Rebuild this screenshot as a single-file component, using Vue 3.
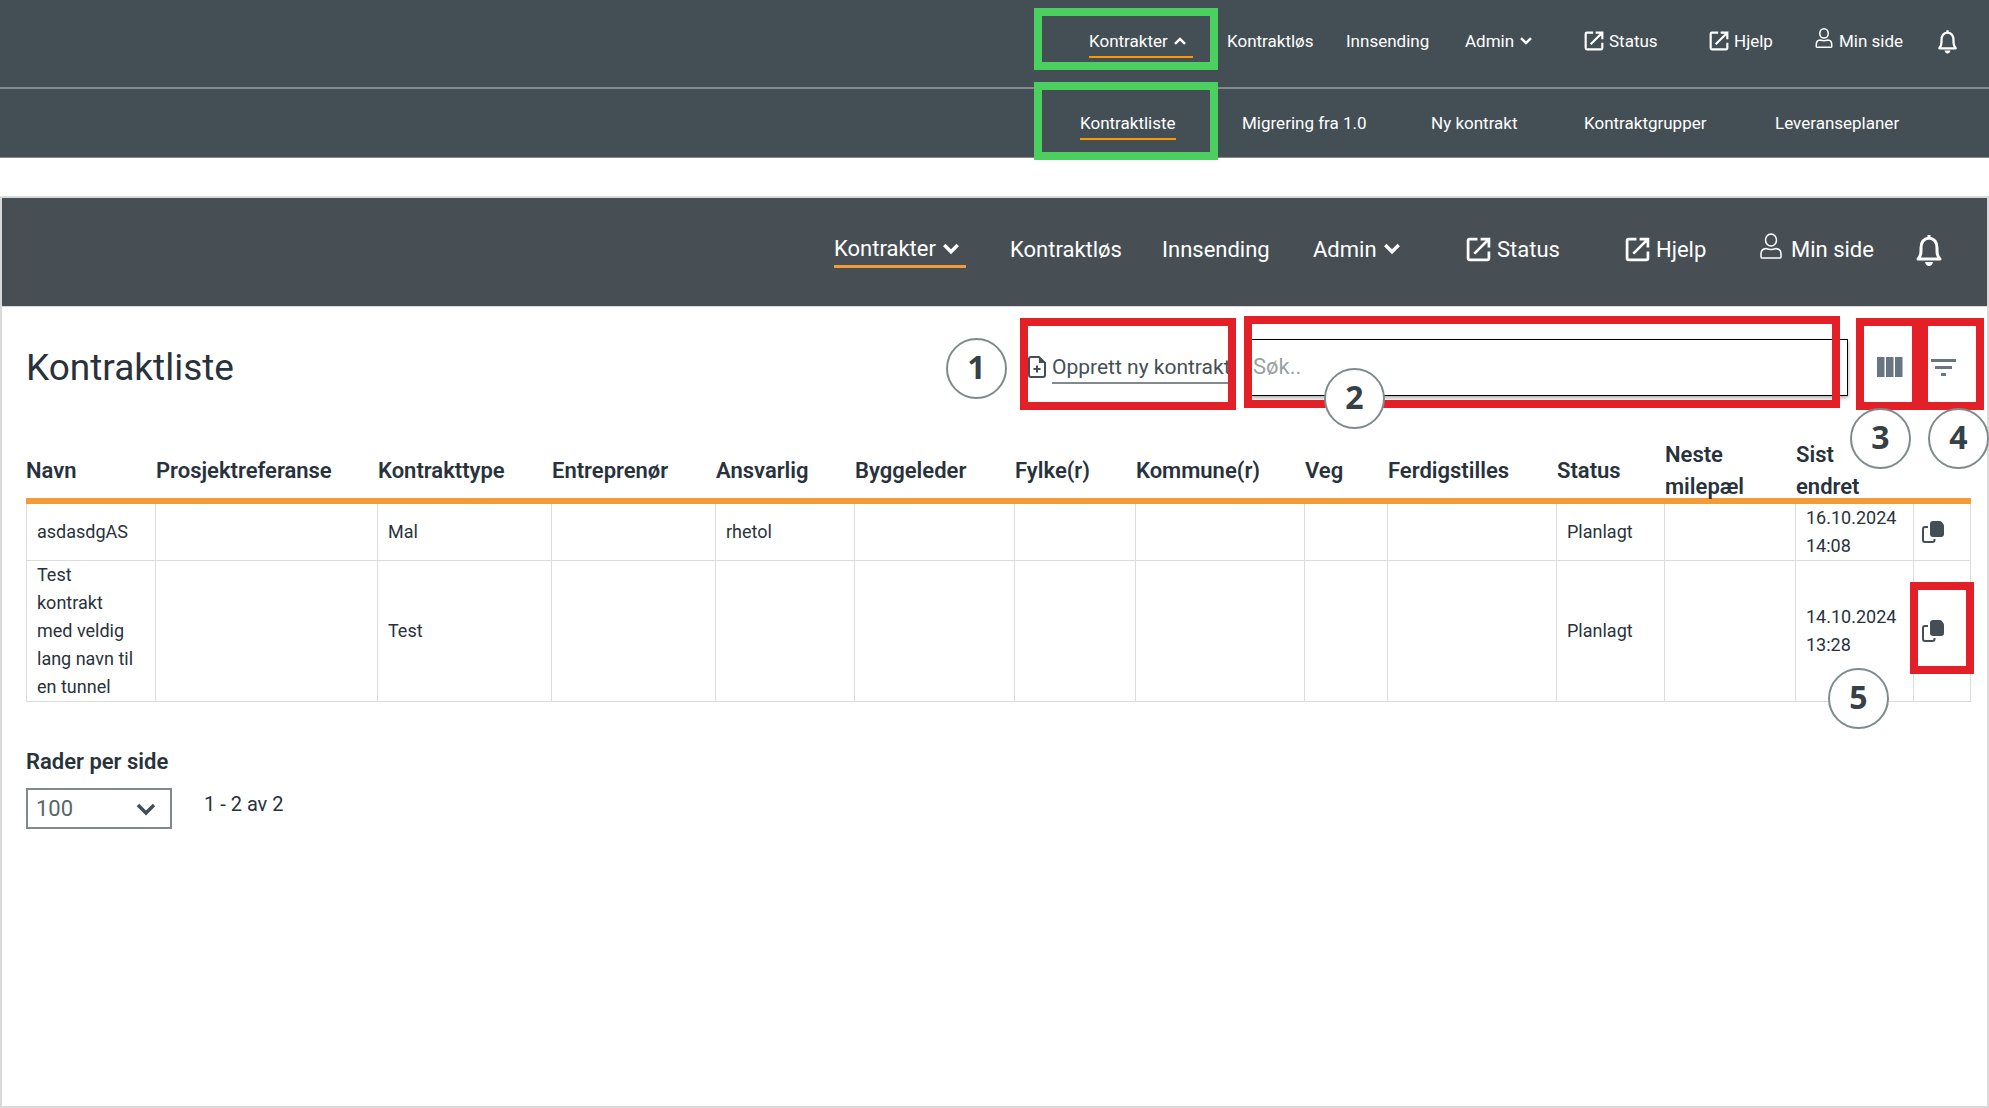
<script setup>
const menuItems = [
  { label: 'Kontrakter', menu: true, active: true },
  { label: 'Kontraktløs' },
  { label: 'Innsending' },
  { label: 'Admin', menu: true },
  { label: 'Status', icon: 'external' },
  { label: 'Hjelp', icon: 'external' },
  { label: 'Min side', icon: 'user' },
]

const bars = [
  { name: 'compact', open: true },
  { name: 'large', open: false },
]

const subItems = ['Kontraktliste', 'Migrering fra 1.0', 'Ny kontrakt', 'Kontraktgrupper', 'Leveranseplaner']

const columns = [
  { key: 'navn', label: 'Navn', share: 130 },
  { key: 'ref', label: 'Prosjektreferanse', share: 222 },
  { key: 'type', label: 'Kontrakttype', share: 174 },
  { key: 'entreprenor', label: 'Entreprenør', share: 164 },
  { key: 'ansvarlig', label: 'Ansvarlig', share: 139 },
  { key: 'byggeleder', label: 'Byggeleder', share: 160 },
  { key: 'fylke', label: 'Fylke(r)', share: 121 },
  { key: 'kommune', label: 'Kommune(r)', share: 169 },
  { key: 'veg', label: 'Veg', share: 83 },
  { key: 'ferdig', label: 'Ferdigstilles', share: 169 },
  { key: 'status', label: 'Status', share: 108 },
  { key: 'milepael', label: 'Neste milepæl', share: 131 },
  { key: 'endret', label: 'Sist endret', share: 118 },
  { key: 'kopier', label: '', share: 57 },
]
const total = columns.reduce((sum, c) => sum + c.share, 0)

const rows = [
  { navn: 'asdasdgAS', type: 'Mal', ansvarlig: 'rhetol', status: 'Planlagt', endret: '16.10.2024 14:08' },
  { navn: 'Test kontrakt med veldig lang navn til en tunnel', type: 'Test', status: 'Planlagt', endret: '14.10.2024 13:28' },
]
</script>

<template>
  <div class="page">
    <template v-for="bar in bars" :key="bar.name">
      <header v-if="bar.open" class="top">
        <nav class="bar compact">
          <a v-for="item in menuItems" :key="item.label" href="#" class="item" :class="{ active: item.active }">
            <svg v-if="item.icon === 'external'" class="ext" viewBox="0 0 24 24"><path d="M11 2H3.500Q2 2 2 3.500V20.500Q2 22 3.500 22H20.500Q22 22 22 20.500V14M14 2H22V10M21 3L8 16" /></svg>
            <svg v-if="item.icon === 'user'" class="user" viewBox="0 0 22 26"><ellipse cx="11" cy="7" rx="5.500" ry="6" /><path d="M1 24V21Q1 16 6 15.500Q11 17.500 16 15.500Q21 16 21 21V24Q21 25 20 25H2Q1 25 1 24Z" /></svg>
            <span>{{ item.label }}</span>
            <svg v-if="item.menu" class="chev" viewBox="0 0 16 12"><path :d="item.active ? 'M2 9.500L8 3.500L14 9.500' : 'M2 2.500L8 8.500L14 2.500'" /></svg>
          </a>
          <button class="bell" type="button" aria-label="Varsler">
            <svg viewBox="0 0 28 32"><path d="M3 25Q6 22 6 17V14Q6 5 14 4Q22 5 22 14V17Q22 22 25 25Z" /><path class="fill" d="M12.500 1H15.500V5H12.500ZM10 28H18Q17 32 14 32Q11 32 10 28Z" /></svg>
          </button>
        </nav>
        <nav class="sub">
          <a v-for="(label, i) in subItems" :key="label" href="#" class="item" :class="{ active: i === 0 }"><span>{{ label }}</span></a>
        </nav>
      </header>

      <section v-else class="frame">
        <nav class="bar large">
          <a v-for="item in menuItems" :key="item.label" href="#" class="item" :class="{ active: item.active }">
            <svg v-if="item.icon === 'external'" class="ext" viewBox="0 0 24 24"><path d="M11 2H3.500Q2 2 2 3.500V20.500Q2 22 3.500 22H20.500Q22 22 22 20.500V14M14 2H22V10M21 3L8 16" /></svg>
            <svg v-if="item.icon === 'user'" class="user" viewBox="0 0 22 26"><ellipse cx="11" cy="7" rx="5.500" ry="6" /><path d="M1 24V21Q1 16 6 15.500Q11 17.500 16 15.500Q21 16 21 21V24Q21 25 20 25H2Q1 25 1 24Z" /></svg>
            <span>{{ item.label }}</span>
            <svg v-if="item.menu" class="chev" viewBox="0 0 16 12"><path d="M2 2.500L8 8.500L14 2.500" /></svg>
          </a>
          <button class="bell" type="button" aria-label="Varsler">
            <svg viewBox="0 0 28 32"><path d="M3 25Q6 22 6 17V14Q6 5 14 4Q22 5 22 14V17Q22 22 25 25Z" /><path class="fill" d="M12.500 1H15.500V5H12.500ZM10 28H18Q17 32 14 32Q11 32 10 28Z" /></svg>
          </button>
        </nav>

        <main class="content">
          <div class="heading">
            <h1>Kontraktliste</h1>
            <a href="#" class="create">
              <svg viewBox="0 0 18 22"><path d="M11 1H3Q1 1 1 3V19Q1 21 3 21H15Q17 21 17 19V7ZM9 9.500V16.500M5.500 13H12.500" /><path class="fill" d="M11 1L17 7H11Z" /></svg>
              <span>Opprett ny kontrakt</span>
            </a>
            <input class="search" type="search" placeholder="Søk.." aria-label="Søk" />
            <button class="tool" type="button" aria-label="Vis kolonner">
              <svg viewBox="0 0 26 20"><path d="M0 0H7.500V20H0ZM9 0H16.500V20H9ZM18 0H25.500V20H18Z" /></svg>
            </button>
            <button class="tool filter" type="button" aria-label="Filter">
              <svg viewBox="0 0 26 20"><path d="M0 2H25V5H0ZM4 9H21V12H4ZM10 16H15V19H10Z" /></svg>
            </button>
          </div>

          <table>
            <colgroup>
              <col v-for="c in columns" :key="c.key" :style="{ width: (c.share / total) * 100 + '%' }" />
            </colgroup>
            <thead>
              <tr>
                <th v-for="c in columns" :key="c.key" scope="col">{{ c.label }}</th>
              </tr>
            </thead>
            <tbody>
              <tr v-for="row in rows" :key="row.navn">
                <td v-for="c in columns" :key="c.key">
                  <button v-if="c.key === 'kopier'" class="copy" type="button" aria-label="Kopier kontrakt">
                    <svg viewBox="0 0 22 22"><path class="line" d="M6 6H3Q1 6 1 8V19Q1 21 3 21H10.500Q12.500 21 12.500 19V18" /><path d="M11 0H17.500Q19 0 20 1.200L21.300 3Q22 4 22 5V13Q22 16 19 16H11Q8 16 8 13V3Q8 0 11 0Z" /></svg>
                  </button>
                  <template v-else>{{ row[c.key] }}</template>
                </td>
              </tr>
            </tbody>
          </table>

          <div class="paging">
            <label for="rows">Rader per side</label>
            <div class="paging-row">
              <div class="picker">
                <select id="rows"><option>100</option></select>
                <svg viewBox="0 0 20 14"><path d="M2 3L10 11L18 3" /></svg>
              </div>
              <span>1 - 2 av 2</span>
            </div>
          </div>
        </main>
      </section>
    </template>

    <div class="mark green menu"></div>
    <div class="mark green submenu"></div>
    <div class="mark m1"></div>
    <div class="mark m2"></div>
    <div class="mark m3"></div>
    <div class="mark m4"></div>
    <div class="mark m5"></div>
    <div class="num n1">1</div>
    <div class="num n2">2</div>
    <div class="num n3">3</div>
    <div class="num n4">4</div>
    <div class="num n5">5</div>
  </div>
</template>

<style>
body {
  margin: 0;
  background: #fff;
}
</style>

<style scoped>
* {
  box-sizing: border-box;
}
.page {
  position: relative;
  display: flex;
  flex-direction: column;
  min-height: 100vh;
  font-family: Roboto, "Noto Sans", sans-serif;
  color: #28323c;
}
button {
  padding: 0;
  border: 0;
  background: none;
  cursor: pointer;
}
svg {
  display: block;
  flex: none;
  fill: none;
  stroke: currentColor;
}
.fill {
  fill: currentColor;
  stroke: none;
}
.top {
  margin-bottom: 38px;
  background: #444f55;
  border-bottom: 1px solid #808a8f;
  font-size: 17px;
}
.bar,
.sub {
  display: grid;
  align-items: center;
  justify-content: end;
  color: #fff;
}
.item {
  display: flex;
  align-items: center;
  justify-self: start;
  color: #fff;
  text-decoration: none;
  white-space: nowrap;
  border-bottom: 2px solid transparent;
}
.item.active {
  border-bottom-color: #ff9800;
}
.compact {
  grid-template-columns: 138px 119px 119px 119px 125px 106px 122px 21px;
  height: 89px;
  padding: 0 31px 4px 0;
  border-bottom: 2px solid #808a8f;
}
.compact .item {
  height: 32px;
  gap: 5px;
}
.sub {
  grid-template-columns: 162px 189px 153px 191px 124px;
  height: 68px;
  padding: 1px 90px 0 0;
}
.sub .item {
  height: 32px;
}
.chev {
  width: 14px;
  height: 10px;
  stroke-width: 3;
}
.item.active .chev {
  margin-right: 6px;
}
.ext {
  width: 20px;
  height: 20px;
  stroke-width: 2.6;
}
.user {
  width: 18px;
  height: 20px;
  margin: 0 1px 6px 0;
  stroke-width: 2;
}
.bell svg {
  width: 21px;
  height: 25px;
  color: #fff;
  stroke-width: 3;
  stroke-linejoin: round;
}
.frame {
  flex: 1;
  border: 2px solid #d9d9d9;
}
.large {
  grid-template-columns: 176px 152px 151px 153px 159px 135px 155px 28px;
  height: 109px;
  padding: 0 44px 4px 0;
  font-size: 22px;
  background: #474f55;
  border-bottom: 1px solid #d9d9d9;
}
.large .item {
  height: 36px;
  gap: 6px;
}
.large .item.active {
  border-bottom: 3px solid #f39c37;
}
.large .chev {
  width: 18px;
  height: 14px;
}
.large .ext {
  width: 25px;
  height: 25px;
}
.large .user {
  width: 22px;
  height: 26px;
  margin-right: 3px;
  stroke-width: 1.5;
}
.large .bell svg {
  width: 28px;
  height: 32px;
}
.content {
  padding: 31px 16px 0 24px;
}
.heading {
  display: flex;
  align-items: center;
  height: 58px;
}
h1 {
  flex: 1;
  margin: 0;
  font-size: 37px;
  font-weight: 400;
}
.create {
  display: flex;
  align-items: center;
  gap: 6px;
  width: 220px;
  color: #444f55;
  font-size: 21px;
  text-decoration: none;
  white-space: nowrap;
}
.create svg {
  width: 18px;
  height: 22px;
  stroke-width: 2;
}
.create span {
  margin-top: 2px;
  line-height: 30px;
  border-bottom: 2px solid #808a8f;
}
.search {
  width: 600px;
  height: 57px;
  padding: 0 4px 2px;
  border: 1px solid #000;
  border-radius: 0;
  outline: 0;
  background: #fff;
  box-shadow: 0 2px 4px #0005;
  font: 22px Roboto, sans-serif;
}
.search::placeholder {
  color: #9a9fa2;
}
.tool {
  margin-left: 29px;
  color: #687684;
}
.tool svg {
  width: 26px;
  height: 20px;
  fill: currentColor;
  stroke: none;
}
.tool.filter {
  margin: 0 14px 0 28px;
}
table {
  width: 100%;
  margin-top: 43px;
  border-collapse: separate;
  border-spacing: 0;
  table-layout: fixed;
}
th {
  height: 65px;
  padding: 0 16px 1px 0;
  font-size: 22px;
  font-weight: 600;
  line-height: 32px;
  text-align: left;
  background: linear-gradient(#f39c37, #f39c37) bottom / 100% 6px no-repeat;
}
td {
  height: 57px;
  padding: 0 16px 0 10px;
  border-right: 1px solid #dcdcdc;
  border-bottom: 1px solid #dcdcdc;
  font-size: 18px;
  line-height: 28px;
}
td:first-child {
  border-left: 1px solid #dcdcdc;
}
.copy {
  display: block;
  color: #444f55;
}
td:last-child {
  padding: 0 8px;
}
.copy svg {
  width: 22px;
  height: 22px;
  fill: currentColor;
  stroke: none;
}
.copy .line {
  fill: none;
  stroke: currentColor;
  stroke-width: 2;
}
.paging {
  margin-top: 44px;
}
label {
  display: block;
  font-size: 22px;
  font-weight: 600;
  line-height: 32px;
}
.paging-row {
  display: flex;
  gap: 32px;
  margin-top: 10px;
  font-size: 20px;
  line-height: 32px;
}
.picker {
  display: grid;
  align-items: center;
  width: 146px;
}
.picker > * {
  grid-area: 1 / 1;
}
select {
  height: 41px;
  padding: 0 8px;
  appearance: none;
  border: 2px solid #808a8d;
  border-radius: 0;
  background: #fff;
  color: #5a6469;
  font: 22px Roboto, sans-serif;
}
.picker svg {
  justify-self: end;
  width: 20px;
  height: 14px;
  margin-right: 16px;
  color: #444f55;
  stroke-width: 3.5;
  pointer-events: none;
}
.mark {
  position: absolute;
  top: 318px;
  width: 64px;
  height: 92px;
  border: 8px solid #e32028;
  pointer-events: none;
}
.mark.green {
  right: 771px;
  width: 184px;
  border-color: #4bcf5e;
}
.mark.menu {
  top: 8px;
  height: 62px;
}
.mark.submenu {
  top: 82px;
  height: 78px;
}
.m1 {
  right: 753px;
  width: 216px;
}
.m2 {
  top: 316px;
  right: 149px;
  width: 596px;
}
.m3 {
  right: 69px;
}
.m4 {
  right: 5px;
}
.m5 {
  top: 582px;
  right: 15px;
}
.num {
  position: absolute;
  display: grid;
  place-items: center;
  width: 61px;
  height: 61px;
  padding-bottom: 4px;
  border: 2px solid #808a8d;
  border-radius: 50%;
  background: #fff;
  color: #364047;
  font: 700 32px "Noto Sans", sans-serif;
}
.n1 {
  top: 338px;
  right: 982px;
}
.n2 {
  top: 368px;
  right: 604px;
}
.n3 {
  top: 408px;
  right: 78px;
}
.n4 {
  top: 408px;
  right: 0;
}
.n5 {
  top: 668px;
  right: 100px;
}
</style>
